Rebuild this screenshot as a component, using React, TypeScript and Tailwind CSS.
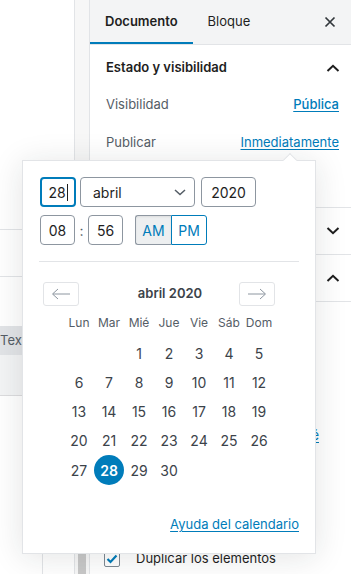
import { useState } from "react";

const font = { fontFamily: "Inter, 'Noto Sans', sans-serif" };

const weekdays = ["Lun", "Mar", "Mié", "Jue", "Vie", "Sáb", "Dom"];

function ChevronUp() {
  return (
    <svg width="14" height="8" viewBox="0 0 14 8" fill="none">
      <path d="M1.5 7L7 1.8L12.5 7" stroke="#1e1e1e" strokeWidth="2" />
    </svg>
  );
}

function ChevronDown({ small }: { small?: boolean }) {
  if (small) {
    return (
      <svg width="12" height="7" viewBox="0 0 12 7" fill="none">
        <path d="M1 1L6 5.6L11 1" stroke="#555d66" strokeWidth="1.5" />
      </svg>
    );
  }
  return (
    <svg width="14" height="8" viewBox="0 0 14 8" fill="none">
      <path d="M1.5 1L7 6.2L12.5 1" stroke="#1e1e1e" strokeWidth="2" />
    </svg>
  );
}

function Arrow({ dir }: { dir: "left" | "right" }) {
  return (
    <svg width="20" height="12" viewBox="0 0 20 12" fill="none">
      {dir === "left" ? (
        <path d="M19 6H2M7 1L1.5 6L7 11" stroke="#8d96a0" strokeWidth="1" />
      ) : (
        <path d="M1 6H18M13 1L18.5 6L13 11" stroke="#8d96a0" strokeWidth="1" />
      )}
    </svg>
  );
}

function DatePopover() {
  const [day] = useState(28);
  const cells: (number | null)[] = [null, null];
  for (let d = 1; d <= 30; d++) cells.push(d);
  const rows: (number | null)[][] = [];
  for (let i = 0; i < cells.length; i += 7) rows.push(cells.slice(i, i + 7));

  return (
    <div className="absolute left-[22px] top-[160px] h-[394px] w-[294px] border border-[#e2e4e7] bg-white px-4 pt-4 shadow-[0_3px_30px_rgba(25,30,35,0.12)]">
      {/* arrow */}
      <div className="absolute left-[262px] top-[-6px] h-[10px] w-[10px] rotate-45 border-l border-t border-[#e2e4e7] bg-white" />

      <div className="ml-px flex items-center text-[14px] text-[#1e1e1e]">
        <div className="flex h-[30px] w-[36px] items-center justify-center rounded-[4px] border-2 border-[#007cba]">
          <span>{day}</span>
          <span className="ml-px h-[17px] w-px bg-[#1e1e1e]" />
        </div>
        <div className="ml-[4px] flex h-[30px] w-[115px] items-center justify-between rounded-[4px] border border-[#8d96a0] pl-[12px] pr-[8px]">
          <span>abril</span>
          <ChevronDown small />
        </div>
        <div className="ml-[6px] flex h-[30px] w-[55px] items-center justify-center rounded-[4px] border border-[#8d96a0]">
          2020
        </div>
      </div>

      <div className="ml-px mt-[8px] flex items-center text-[14px] text-[#1e1e1e]">
        <div className="flex h-[30px] w-[35px] items-center justify-center rounded-[4px] border border-[#8d96a0]">
          08
        </div>
        <div className="w-[13px] text-center text-[#555d66]">:</div>
        <div className="flex h-[30px] w-[35px] items-center justify-center rounded-[4px] border border-[#8d96a0]">
          56
        </div>
        <div className="ml-[12px] flex h-[30px] text-[#007cba]">
          <div className="flex w-[36px] items-center justify-center rounded-l-[3px] border border-r-0 border-[#8d96a0] bg-[#edeff0] shadow-[inset_0_1px_2px_rgba(0,0,0,0.08)]">
            AM
          </div>
          <div className="flex w-[36px] items-center justify-center rounded-r-[3px] border border-[#007cba] bg-white">
            PM
          </div>
        </div>
      </div>

      <div className="mt-[16px] h-px bg-[#e2e4e7]" />

      <div className="ml-[4px] mt-[20px] w-[232px]">
        <div className="flex h-[24px] items-center">
          <div className="flex h-[24px] w-[36px] items-center justify-center rounded-[3px] border border-[#e2e4e7]">
            <Arrow dir="left" />
          </div>
          <div className="flex-1 pl-[22px] text-center text-[13px] font-semibold text-[#3c434a]">
            abril 2020
          </div>
          <div className="flex h-[24px] w-[36px] items-center justify-center rounded-[3px] border border-[#e2e4e7]">
            <Arrow dir="right" />
          </div>
        </div>

        <div className="ml-[21px] mt-[5px] grid h-[24px] w-[210px] grid-cols-7 items-center text-center text-[12px] text-[#555d66]">
          {weekdays.map((w) => (
            <span key={w}>{w}</span>
          ))}
        </div>

        <div className="ml-[21px] mt-[4px] w-[210px]">
          {rows.map((row, i) => (
            <div key={i} className="grid h-[29px] grid-cols-7">
              {row.map((d, j) => (
                <div key={j} className="flex items-center justify-center text-[14px] text-[#3c434a]">
                  {d === day ? (
                    <span className="flex h-[30px] w-[30px] items-center justify-center rounded-full bg-[#007cba] font-semibold text-white">
                      {d}
                    </span>
                  ) : (
                    d
                  )}
                </div>
              ))}
            </div>
          ))}
        </div>
      </div>

      <div className="mt-[31px] flex justify-end">
        <span className="text-[13px] text-[#007cba] underline underline-offset-2">Ayuda del calendario</span>
      </div>
    </div>
  );
}

export default function App() {
  return (
    <div className="relative h-[574px] w-[351px] overflow-hidden bg-white" style={font}>
      <div className="flex h-full">
        {/* editor canvas edge */}
        <div className="flex w-[75px] shrink-0 flex-col border-r border-[#e2e4e7]">
          <div className="h-[229px]" />
          <div className="h-[47px] border-t border-[#e2e4e7]" />
          <div className="h-[50px] border-t border-[#e2e4e7]" />
          <div className="flex h-[29px] items-center bg-[#e2e4e7] text-[13px] text-[#555d66]">Texto</div>
          <div className="h-[41px] border-b border-[#dcdcde] bg-[#f3f4f5]" />
          <div className="h-[150px]" />
          <div className="ml-[42px] flex-1 border-l border-[#e2e4e7]" />
        </div>

        {/* scroll strip */}
        <div className="flex w-[15px] shrink-0 flex-col border-r border-[#e2e4e7] bg-[#f7f7f7]">
          <div className="h-[440px]" />
          <div className="mx-[3px] flex-1 bg-[#c8c8c8]" />
        </div>

        {/* sidebar */}
        <div className="flex min-w-0 flex-1 flex-col text-[13px] text-[#1e1e1e]">
          <div className="flex h-[45px] items-stretch border-b border-[#e2e4e7] bg-[#f3f4f5]">
            <div className="flex items-center px-[15px] font-semibold shadow-[inset_0_-2px_0_#007cba]">Documento</div>
            <div className="flex items-center px-[15px]">Bloque</div>
            <div className="ml-auto flex items-center pr-[15px]">
              <svg width="12" height="12" viewBox="0 0 12 12">
                <path d="M1.5 1.5L10.5 10.5M10.5 1.5L1.5 10.5" stroke="#32373c" strokeWidth="1.7" />
              </svg>
            </div>
          </div>

          <div className="flex h-[46px] items-center justify-between pl-4 pr-[11px] font-semibold">
            <span>Estado y visibilidad</span>
            <ChevronUp />
          </div>
          <div className="flex h-[28px] items-center justify-between pl-4 pr-[12px]">
            <span className="text-[#555d66]">Visibilidad</span>
            <span className="font-medium text-[#007cba] underline underline-offset-2">Pública</span>
          </div>
          <div className="mt-[10px] flex h-[28px] items-center justify-between pl-4 pr-[12px]">
            <span className="text-[#555d66]">Publicar</span>
            <span className="text-[#007cba] underline underline-offset-2">Inmediatamente</span>
          </div>
          <div className="h-[50px]" />

          {/* collapsed panels, titles sit under the popover */}
          <div className="flex h-[47px] items-center justify-end border-t border-[#e2e4e7] pr-[11px]">
            <ChevronDown />
          </div>
          <div className="flex h-[47px] items-center justify-end border-t border-[#e2e4e7] pr-[11px]">
            <ChevronUp />
          </div>
          <div className="border-t border-[#e2e4e7] pt-[126px]">
            <div className="flex h-[16px] items-center justify-end pr-[32px]">
              <span className="text-[#007cba] underline underline-offset-2">é</span>
            </div>
            <div className="mt-[107px] flex h-[16px] items-center pl-[14px]">
              <span className="flex h-[16px] w-[16px] items-center justify-center rounded-[2px] border border-[#7e8993] bg-white">
                <svg width="12" height="10" viewBox="0 0 12 10">
                  <path d="M1.5 5L4.5 8L10.5 1.5" stroke="#007cba" strokeWidth="2.2" fill="none" />
                </svg>
              </span>
              <span className="ml-[16px]">Duplicar los elementos</span>
            </div>
          </div>
        </div>
      </div>

      <DatePopover />
    </div>
  );
}
